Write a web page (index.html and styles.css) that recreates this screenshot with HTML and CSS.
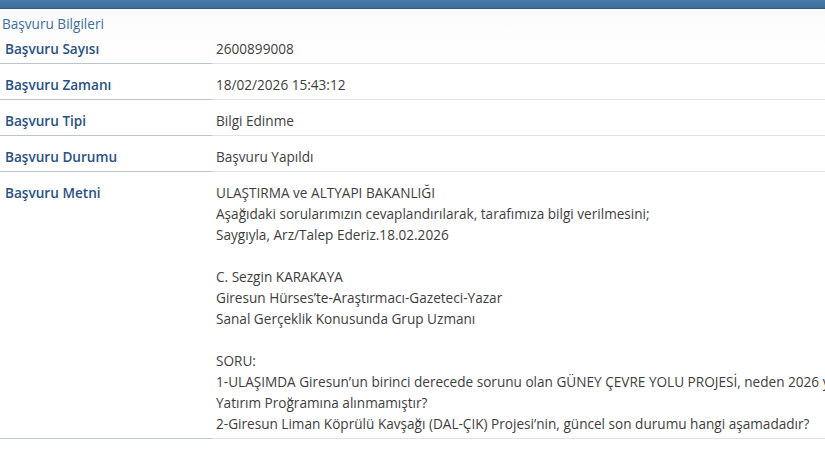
FILE: index.html
```html
<!DOCTYPE html>
<html lang="tr">
  <head>
    <meta charset="UTF-8">
    <meta name="viewport" content="width=device-width, initial-scale=1.0">
    <title>Başvuru Bilgileri</title>
    <link rel="stylesheet" href="styles.css">
  </head>
  <body>
    <div class="top-bar"></div>
    <div id="container">
      <div class="section-title">Başvuru Bilgileri</div>
      <table class="info-table">
        <tr>
          <th>Başvuru Sayısı</th>
          <td>2600899008</td>
        </tr>
        <tr>
          <th>Başvuru Zamanı</th>
          <td>18/02/2026 15:43:12</td>
        </tr>
        <tr>
          <th>Başvuru Tipi</th>
          <td>Bilgi Edinme</td>
        </tr>
        <tr>
          <th>Başvuru Durumu</th>
          <td>Başvuru Yapıldı</td>
        </tr>
        <tr>
          <th>Başvuru Metni</th>
          <td class="request-text">ULAŞTIRMA ve ALTYAPI BAKANLIĞI
Aşağıdaki sorularımızın cevaplandırılarak, tarafımıza bilgi verilmesini;
Saygıyla, Arz/Talep Ederiz.18.02.2026

C. Sezgin KARAKAYA
Giresun Hürses’te-Araştırmacı-Gazeteci-Yazar
Sanal Gerçeklik Konusunda Grup Uzmanı

SORU:
1-ULAŞIMDA Giresun’un birinci derecede sorunu olan GÜNEY ÇEVRE YOLU PROJESİ, neden 2026 yılı Yatırım Proğramına alınmamıştır?
2-Giresun Liman Köprülü Kavşağı (DAL-ÇIK) Projesi’nin, güncel son durumu hangi aşamadadır?</td>
        </tr>
      </table>
    </div>
  </body>
</html>
```

FILE: styles.css
```css
html,
body {
  margin: 0;
  overflow: hidden;
  background: #fff;
  font-family: 'Open Sans', 'Noto Sans', sans-serif;
  font-size: 13.6px;
}

.top-bar {
  height: 8px;
  background: linear-gradient(#4a7cab, #3f6d9b);
  border-bottom: 1px solid #35597d;
  box-shadow: 0 2px 4px rgba(90, 100, 90, 0.45);
}

#container {
  width: 860px;
  background: linear-gradient(#fbfbfb, #fff 60px);
}

.section-title {
  color: #3d6f9f;
  padding: 5px 2px 0;
  line-height: 20px;
  margin-bottom: -6px;
}

.info-table {
  width: 100%;
  border-collapse: collapse;
}

.info-table th,
.info-table td {
  line-height: 21px;
  padding: 9.5px 0 4.5px;
  vertical-align: top;
  text-align: left;
}

.info-table th {
  width: 207px;
  padding-left: 5px;
  color: #2a5183;
  font-weight: 600;
  border-bottom: 1px solid #b9c5d2;
}

.info-table td {
  padding-left: 4px;
  color: #3e3e3e;
  border-bottom: 1px solid #e2e2e2;
}

.request-text {
  white-space: pre-line;
  line-height: 21.4px;
}
```
